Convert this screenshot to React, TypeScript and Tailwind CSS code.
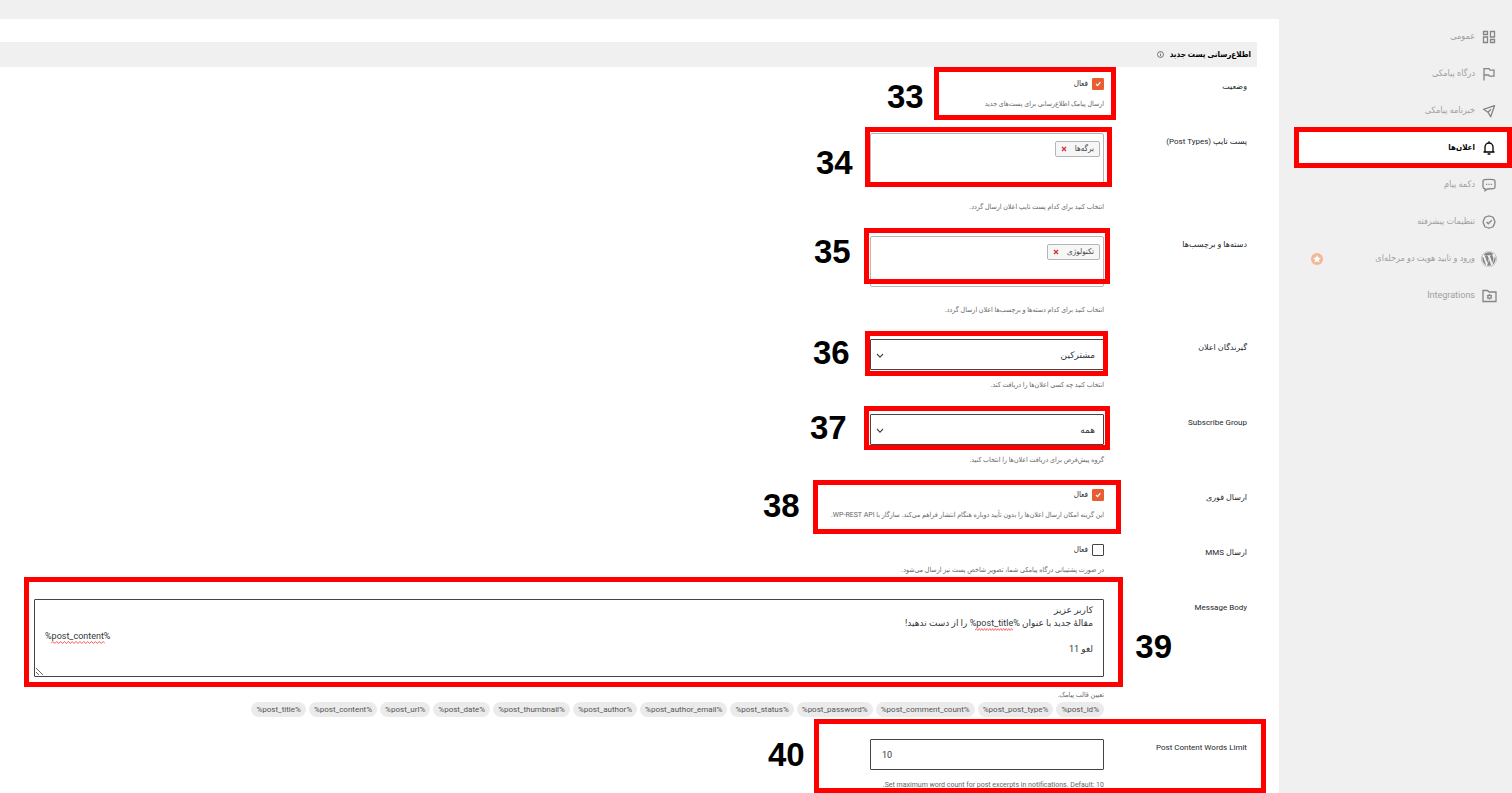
import React, { useState } from 'react';
import { FaWordpress } from 'react-icons/fa';
import clsx from 'clsx';

interface MarkerProps {
  number: number;
  box: string;
  label: string;
}

function Marker({ number, box, label }: MarkerProps) {
  return (
    <div className={clsx('pointer-events-none absolute z-10 border-[5px] border-[#fe0000]', box)}>
      <span
        className={clsx(
          'absolute font-["Liberation_Sans",sans-serif] text-[33px] leading-[34px] font-bold text-black',
          label
        )}
      >
        {number}
      </span>
    </div>
  );
}

interface RowProps {
  label: string;
  htmlFor: string;
  children: React.ReactNode;
}

function Row({ label, htmlFor, children }: RowProps) {
  return (
    <div className="flex pt-1.5 pb-4 pr-2.5 pl-[34px] last:pb-0">
      <label
        htmlFor={htmlFor}
        className='w-[143px] shrink-0 pt-0.5 font-[Roboto,"DejaVu_Sans",sans-serif] text-[8px] leading-[14px] text-[#23282d]'
      >
        {label}
      </label>
      <div className="relative min-w-0 flex-1">{children}</div>
    </div>
  );
}

function Hint({ children, className = 'mt-2' }: { children: React.ReactNode; className?: string }) {
  return <p className={clsx('text-[7px] leading-[14px] text-[#666]', className)}>{children}</p>;
}

function CheckField({ id, initial }: { id: string; initial: boolean }) {
  const [checked, setChecked] = useState(initial);

  return (
    <div className="flex h-3 items-center gap-1">
      <span className="relative flex">
        <input
          id={id}
          type="checkbox"
          checked={checked}
          onChange={(e) => setChecked(e.target.checked)}
          className="h-3 w-3 appearance-none rounded-[1px] border border-[#444] bg-white checked:border-[#e85d31] checked:bg-[#e85d31]"
        />
        {checked && (
          <svg viewBox="0 0 12 12" className="pointer-events-none absolute inset-0 h-3 w-3">
            <path d="M4 6l1.6 1.7L8.4 4.2" fill="none" stroke="#fff" strokeWidth="1.2" />
          </svg>
        )}
      </span>
      <label htmlFor={id} className="text-[8px] leading-3 font-medium text-[#23282d]">
        فعال
      </label>
    </div>
  );
}

function TagBox({ id, tag }: { id: string; tag: string }) {
  const [tags, setTags] = useState([tag]);

  return (
    <div id={id} className="h-[51px] w-[234px] rounded-[2px] border border-[#b5b5b5] bg-white px-[3px] py-[7px]">
      {tags.map((name) => (
        <span
          key={name}
          className="inline-flex h-4 items-center gap-2 rounded-[2px] border border-[#b5b5b5] bg-[#f6f6f6] px-[5px] align-top text-[8px] leading-[14px] text-[#444]"
        >
          {name}
          <button type="button" aria-label="حذف" onClick={() => setTags(tags.filter((t) => t !== name))}>
            <svg viewBox="0 0 6 6" className="h-1.5 w-1.5">
              <path d="M1 1l4 4M5 1L1 5" stroke="#d63638" strokeWidth="1.4" />
            </svg>
          </button>
        </span>
      ))}
    </div>
  );
}

function SelectField({ id, option }: { id: string; option: string }) {
  return (
    <div className="relative w-[234px]">
      <select
        id={id}
        className='block h-[31px] w-full appearance-none rounded-[1px] border border-[#444] bg-white px-2 font-[Roboto,"DejaVu_Sans",sans-serif] text-[9px] leading-4 text-[#32373c]'
      >
        <option>{option}</option>
      </select>
      <svg viewBox="0 0 8 6" className="pointer-events-none absolute top-3.5 left-1.5 h-1.5 w-2">
        <path d="M1 1l3 3.2L7 1" fill="none" stroke="#444" strokeWidth="1.1" />
      </svg>
    </div>
  );
}

function Squiggle({ className }: { className: string }) {
  return (
    <svg viewBox="0 0 56 3" preserveAspectRatio="none" className={clsx('pointer-events-none absolute h-[3px]', className)}>
      <path
        d="M0 2.5l2-2 2 2 2-2 2 2 2-2 2 2 2-2 2 2 2-2 2 2 2-2 2 2 2-2 2 2 2-2 2 2 2-2 2 2 2-2 2 2 2-2 2 2 2-2 2 2 2-2 2 2 2-2 2 2"
        fill="none"
        stroke="#f55"
        strokeWidth="1"
      />
    </svg>
  );
}

const line = { fill: 'none', stroke: 'currentColor', strokeWidth: 1.3 };

const GridIcon = () => (
  <svg viewBox="0 0 14 14" className="h-3.5 w-3.5" {...line}>
    <path d="M1.5 1.5h4v3h-4zM1.5 7h4v5.500h-4zM8.500 1.500h4v5.500h-4zM8.500 9.500h4v3h-4z" />
  </svg>
);

const FlagIcon = () => (
  <svg viewBox="0 0 14 14" className="h-3.5 w-3.5" {...line}>
    <path d="M2 13.500V1.700h5l1 1.500h4v6H7.500L6.500 8H2" />
  </svg>
);

const PlaneIcon = () => (
  <svg viewBox="0 0 14 14" className="h-3.5 w-3.5" {...line}>
    <path d="M12.500 1.700L1.500 5.300l4.500 3L8.700 12.700zM6 8.300l3-3" strokeLinejoin="round" />
  </svg>
);

const BellIcon = () => (
  <svg viewBox="0 0 14 14" className="h-3.5 w-3.5" {...line}>
    <path d="M1.500 11h11M3 11V6a4 4 0 0 1 8 0v5M7 .3V2M5.600 13h2.800" />
  </svg>
);

const ChatIcon = () => (
  <svg viewBox="0 0 14 14" className="h-3.5 w-3.5" {...line}>
    <path d="M2.500 1.700Q7 1 11.500 1.700 13 2 13 3.500V9q0 1.500-1.500 1.600L5.500 11 3 12.700V10.700Q1 10.500 1 9V3.500Q1 2 2.500 1.700z" />
    <path d="M4 6.300h1.200M6.400 6.300h1.200M8.800 6.300H10" />
  </svg>
);

const BadgeIcon = () => (
  <svg viewBox="0 0 14 14" className="h-3.5 w-3.5" {...line}>
    <path d="M5 1.500L7 .9l2 .6 2 .7.900 1.900L13 7l-1.100 2.900L11 11.800l-2 .7-2 .6-2-.6-2-.7-.900-1.900L1 7l1.100-2.900L3 2.200z" />
    <path d="M4.500 7l1.800 1.800L9.700 5.300" />
  </svg>
);

const FolderIcon = () => (
  <svg viewBox="0 0 15 14" className="h-3.5 w-[15px]" {...line}>
    <path d="M1 1.500h4.500L7 3h7v9.500H1z" />
    <circle cx="7.500" cy="7.800" r="1.600" />
    <path d="M7.500 5v1.200M7.500 9.400v1.200M5.100 6.400l1 .6M8.900 8.600l1 .6M5.100 9.200l1-.6M8.900 7l1-.6" />
  </svg>
);

const navItems = [
  { label: 'عمومی', icon: <GridIcon /> },
  { label: 'درگاه پیامکی', icon: <FlagIcon /> },
  { label: 'خبرنامه پیامکی', icon: <PlaneIcon /> },
  { label: 'اعلان‌ها', icon: <BellIcon />, active: true },
  { label: 'دکمه پیام', icon: <ChatIcon /> },
  { label: 'تنظیمات پیشرفته', icon: <BadgeIcon /> },
  { label: 'ورود و تایید هویت دو مرحله‌ای', icon: <FaWordpress size={16} />, pro: true },
  { label: 'Integrations', icon: <FolderIcon /> },
];

const variables = [
  'post_id',
  'post_post_type',
  'post_comment_count',
  'post_password',
  'post_status',
  'post_author_email',
  'post_author',
  'post_thumbnail',
  'post_date',
  'post_url',
  'post_content',
  'post_title',
];

const defaultMessage = `کاربر عزیز
مقالهٔ جدید با عنوان %post_title% را از دست ندهید!
%post_content%
لغو 11`;

function Sidebar() {
  return (
    <nav className="w-[233px] shrink-0 pt-[18px] pr-[5px] pl-5">
      {navItems.map((item) => (
        <a
          key={item.label}
          href="#"
          className={clsx(
            'relative flex h-[37px] items-center gap-1.5 pr-2.5',
            item.active ? 'bg-white text-[8px] font-bold text-black' : 'text-[9px] text-[#a0a0a0]'
          )}
        >
          <span className={clsx('flex w-4 shrink-0 justify-center', !item.active && 'text-[#858585]')}>{item.icon}</span>
          <span>{item.label}</span>
          {item.pro && (
            <svg viewBox="0 0 12 12" className="mr-auto ml-3 h-3 w-3">
              <circle cx="6" cy="6" r="6" fill="#f3b795" />
              <path d="M6 2l1.200 2.600 2.800.3-2.100 1.900.6 2.800L6 8.200 3.500 9.600l.6-2.800L2 4.900l2.800-.3z" fill="#fff" />
            </svg>
          )}
          {item.active && (
            <span className="pointer-events-none absolute -top-0.5 -right-[5px] -left-[5px] h-[41px] border-[5px] border-[#fe0000]" />
          )}
        </a>
      ))}
    </nav>
  );
}

export default function App() {
  const [message, setMessage] = useState(defaultMessage);
  const [limit, setLimit] = useState('10');

  return (
    <div
      dir="rtl"
      lang="fa"
      className='flex min-h-screen bg-[#f0f0f0] font-[Roboto,"DejaVu_Sans_Condensed","DejaVu_Sans",sans-serif]'
    >
      <Sidebar />
      <main className="mt-[19px] min-w-0 flex-1 bg-white pt-[23px] pr-[22px]">
        <h2 className="mb-[5px] flex h-[25px] items-center gap-1.5 bg-[#f0f0f0] pr-1.5 text-[8px] font-bold text-black">
          اطلاع‌رسانی پست جدید
          <svg viewBox="0 0 8 8" className="h-[7px] w-[7px]" fill="none" stroke="#444" strokeWidth="0.8">
            <circle cx="4" cy="4" r="3.400" />
            <path d="M4 2v.8M4 3.500V6" />
          </svg>
        </h2>

        <Row label="وضعیت" htmlFor="status">
          <CheckField id="status" initial />
          <Hint className="mt-[7px]">ارسال پیامک اطلاع‌رسانی برای پست‌های جدید</Hint>
          <Marker number={33} box="-top-[11px] -right-3 h-[53px] w-[182px]" label="top-2 -left-[52px]" />
        </Row>

        <Row label="پست تایپ (Post Types)" htmlFor="post-types">
          <TagBox id="post-types" tag="برگه‌ها" />
          <Hint className="mt-4">انتخاب کنید برای کدام پست تایپ اعلان ارسال گردد.</Hint>
          <Marker number={34} box="-top-1.5 -right-2 h-[60px] w-[247px]" label="top-3.5 -left-[54px]" />
        </Row>

        <Row label="دسته‌ها و برچسب‌ها" htmlFor="terms">
          <TagBox id="terms" tag="تکنولوژی" />
          <Hint className="mt-4">انتخاب کنید برای کدام دسته‌ها و برچسب‌ها اعلان ارسال گردد.</Hint>
          <Marker number={35} box="-top-2 -right-1.5 h-14 w-[246px]" label="top-0.5 -left-[55px]" />
        </Row>

        <Row label="گیرندگان اعلان" htmlFor="receivers">
          <SelectField id="receivers" option="مشترکین" />
          <Hint>انتخاب کنید چه کسی اعلان‌ها را دریافت کند.</Hint>
          <Marker number={36} box="-top-2 -right-1 h-[45px] w-[243px]" label="top-0 -left-[57px]" />
        </Row>

        <Row label="Subscribe Group" htmlFor="group">
          <SelectField id="group" option="همه" />
          <Hint>گروه پیش‌فرض برای دریافت اعلان‌ها را انتخاب کنید.</Hint>
          <Marker number={37} box="-top-2 -right-1.5 h-11 w-[246px]" label="top-0 -left-[59px]" />
        </Row>

        <Row label="ارسال فوری" htmlFor="instant">
          <CheckField id="instant" initial />
          <Hint className="mt-[7px]">
            این گزینه امکان ارسال اعلان‌ها را بدون تأیید دوباره هنگام انتشار فراهم می‌کند. سازگار با WP-REST API.
          </Hint>
          <Marker number={38} box="-top-[9px] -right-[17px] h-[54px] w-[308px]" label="top-1 -left-[55px]" />
        </Row>

        <Row label="ارسال MMS" htmlFor="mms">
          <CheckField id="mms" initial={false} />
          <Hint className="mt-[7px]">در صورت پشتیبانی درگاه پیامکی شما، تصویر شاخص پست نیز ارسال می‌شود.</Hint>
        </Row>

        <Row label="Message Body" htmlFor="message">
          <textarea
            id="message"
            value={message}
            onChange={(e) => setMessage(e.target.value)}
            spellCheck={false}
            className='block h-[78px] w-full resize rounded-[1px] border border-[#444] bg-white px-2.5 py-1 font-[Roboto,"DejaVu_Sans",sans-serif] text-[9px] leading-[13px] text-[#32373c] [unicode-bidi:plaintext]'
          />
          <Squiggle className="top-[29px] right-[91px] w-[38px]" />
          <Squiggle className="top-[42px] left-[17px] w-[54px]" />
          <Hint className="mt-[11px]">تعیین قالب پیامک.</Hint>
          <div className="flex flex-wrap gap-[3px]">
            {variables.map((name) => (
              <code
                key={name}
                dir="ltr"
                className="rounded-full bg-[#ebebeb] px-[5px] font-[Roboto,sans-serif] text-[8px] leading-[15px] text-[#555]"
              >
                %{name}%
              </code>
            ))}
          </div>
          <Marker number={39} box="-top-[22px] -right-[19px] -left-2.5 h-[110px]" label="top-12 -right-[54px]" />
        </Row>

        <Row label="Post Content Words Limit" htmlFor="limit">
          <input
            id="limit"
            dir="ltr"
            value={limit}
            onChange={(e) => setLimit(e.target.value)}
            className="block h-[31px] w-[234px] rounded-[1px] border border-[#444] bg-white px-[11px] text-[9px] text-[#32373c]"
          />
          <Hint>Set maximum word count for post excerpts in notifications. Default: 10.</Hint>
          <Marker number={40} box="-top-5 -right-[162px] h-[74px] w-[452px]" label="top-3.5 -left-[51px]" />
        </Row>
      </main>
    </div>
  );
}
